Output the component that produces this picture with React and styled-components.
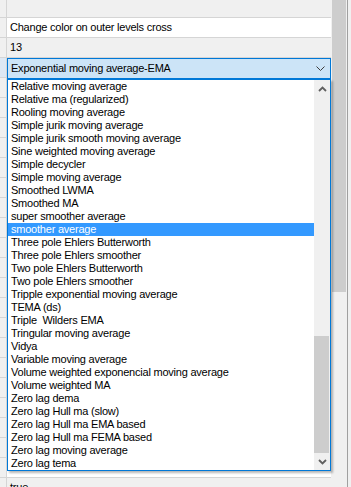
import React from "react";
import styled, { createGlobalStyle } from "styled-components";

const GlobalStyle = createGlobalStyle`
  html, body { margin: 0; padding: 0; background: #f0f0f0; overflow: hidden; }
  body {
    font-family: "Liberation Sans", Arial, sans-serif;
    font-size: 11px;
    letter-spacing: -0.22px;
    color: #000;
  }
`;

const Window = styled.div`
  position: relative;
  width: 351px;
  height: 487px;
  overflow: hidden;
  display: flex;
  background: #f0f0f0;
`;

const Grid = styled.div`
  width: 331px;
  display: flex;
  flex-direction: column;
  flex: none;
`;

const Row = styled.div`
  display: flex;
  flex: none;
  height: ${(p) => (p.$first ? 18 : 20)}px;
  box-sizing: border-box;
  border-bottom: 1px solid #d5d5d5;
  background: ${(p) => (p.$gray ? "#f0f0f0" : "#ffffff")};
`;

const Gutter = styled.div`
  width: 6px;
  flex: none;
  border-right: 1px solid #d5d5d5;
  background: ${(p) => (p.$active ? "#dde8f4" : "#f0f0f0")};
`;

const Cell = styled.div`
  flex: 1;
  padding-left: 3px;
  line-height: 19px;
  white-space: nowrap;
  overflow: visible;
  position: relative;
`;

const Combo = styled.div`
  position: relative;
  z-index: 2;
  margin-left: -3px;
  height: 21px;
  box-sizing: border-box;
  border: 1px solid #0078d7;
  background: #cce4f7;
  display: flex;
  align-items: center;
  justify-content: space-between;
  padding: 0 5px 0 3px;
  line-height: 19px;
`;

const ComboText = styled.span`
  white-space: nowrap;
`;

const OuterScroll = styled.div`
  width: 16px;
  flex: none;
  background: #f0f0f0;
  display: flex;
  flex-direction: column;
  padding-left: 1px;
  box-sizing: border-box;
`;

const OuterThumb = styled.div`
  width: 14px;
  height: 292px;
  background: #cdcdcd;
`;

const Edge = styled.div`
  width: 1px;
  flex: none;
  background: #a0a0a0;
`;

const Margin = styled.div`
  flex: 1;
  background: #f0f0f0;
`;

const Dropdown = styled.div`
  position: absolute;
  z-index: 3;
  left: 7px;
  top: 79px;
  width: 324px;
  height: 392px;
  box-sizing: border-box;
  border: 1px solid #0078d7;
  background: #fff;
  display: flex;
  box-shadow: 2px 2px 2px rgba(0, 0, 0, 0.28);
`;

const List = styled.ul`
  list-style: none;
  margin: 0;
  padding: 0;
  flex: 1;
  min-width: 0;
`;

const Item = styled.li`
  height: 13px;
  line-height: 13px;
  padding-left: 3px;
  white-space: nowrap;
  overflow: hidden;
  background: ${(p) => (p.$selected ? "#3399ff" : "transparent")};
  color: ${(p) => (p.$selected ? "#fff" : "#000")};
`;

const ScrollBar = styled.div`
  width: 16px;
  flex: none;
  background: #f0f0f0;
  display: flex;
  flex-direction: column;
`;

const ArrowButton = styled.div`
  height: 17px;
  flex: none;
  display: flex;
  align-items: center;
  justify-content: center;
`;

const Track = styled.div`
  flex: 1;
  display: flex;
  flex-direction: column;
  justify-content: flex-end;
  padding-right: 1px;
`;

const Thumb = styled.div`
  height: 117px;
  background: #cdcdcd;
`;

const items = [
  "Relative moving average",
  "Relative ma (regularized)",
  "Rooling moving average",
  "Simple jurik moving average",
  "Simple jurik smooth moving average",
  "Sine weighted moving average",
  "Simple decycler",
  "Simple moving average",
  "Smoothed LWMA",
  "Smoothed MA",
  "super smoother average",
  "smoother average",
  "Three pole Ehlers Butterworth",
  "Three pole Ehlers smoother",
  "Two pole Ehlers Butterworth",
  "Two pole Ehlers smoother",
  "Tripple exponential moving average",
  "TEMA (ds)",
  "Triple\u00a0 Wilders EMA",
  "Tringular moving average",
  "Vidya",
  "Variable moving average",
  "Volume weighted exponencial moving average",
  "Volume weighted MA",
  "Zero lag dema",
  "Zero lag Hull ma (slow)",
  "Zero lag Hull ma EMA based",
  "Zero lag Hull ma FEMA based",
  "Zero lag moving average",
  "Zero lag tema",
];

const rowValues = { 1: "Change color on outer levels cross", 2: "13", 24: "true" };

const ChevronDown = () => (
  <svg width="9" height="5" viewBox="0 0 9 5">
    <polyline points="0.5,0.5 4.5,4.5 8.5,0.5" fill="none" stroke="#3c3c3c" strokeWidth="1" />
  </svg>
);

const ScrollArrow = ({ up }) => (
  <svg width="9" height="6" viewBox="0 0 9 6">
    <polyline
      points={up ? "1,5 4.5,1.5 8,5" : "1,1 4.5,4.5 8,1"}
      fill="none"
      stroke="#606060"
      strokeWidth="1.8"
    />
  </svg>
);

export default function App() {
  const rows = Array.from({ length: 25 }, (_, i) => i);
  return (
    <>
      <GlobalStyle />
      <Window>
        <Grid>
          {rows.map((i) => (
            <Row key={i} $first={i === 0} $gray={i % 2 === 0}>
              <Gutter $active={i === 3} />
              <Cell>
                {i === 3 ? (
                  <Combo>
                    <ComboText>Exponential moving average-EMA</ComboText>
                    <ChevronDown />
                  </Combo>
                ) : (
                  rowValues[i] || ""
                )}
              </Cell>
            </Row>
          ))}
        </Grid>
        <OuterScroll>
          <OuterThumb />
        </OuterScroll>
        <Edge />
        <Margin />
        <Dropdown>
          <List>
            {items.map((t) => (
              <Item key={t} $selected={t === "smoother average"}>
                {t}
              </Item>
            ))}
          </List>
          <ScrollBar>
            <ArrowButton>
              <ScrollArrow up />
            </ArrowButton>
            <Track>
              <Thumb />
            </Track>
            <ArrowButton>
              <ScrollArrow />
            </ArrowButton>
          </ScrollBar>
        </Dropdown>
      </Window>
    </>
  );
}
